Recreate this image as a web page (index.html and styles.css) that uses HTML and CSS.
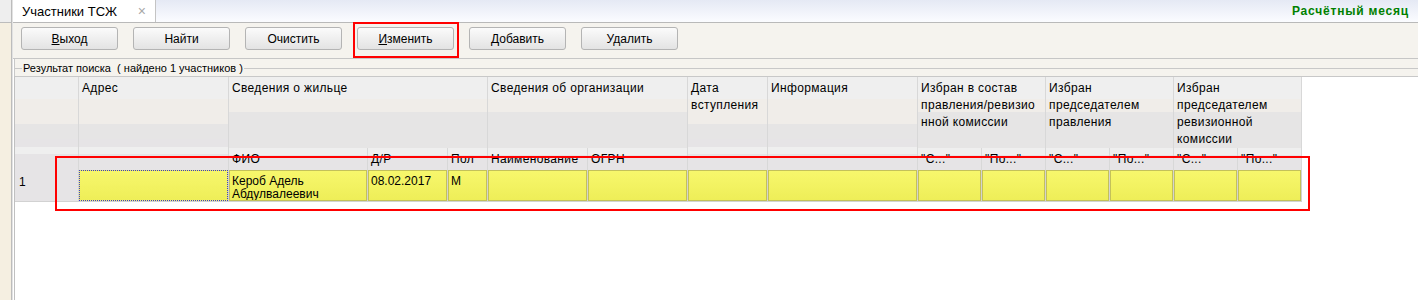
FILE: index.html
```html
<!DOCTYPE html>
<html lang="ru">
<head>
    <meta charset="UTF-8">
    <title>Участники ТСЖ</title>
    <link rel="stylesheet" href="styles.css">
</head>
<body>
    <div class="app">
        <div class="side"><div class="side-top"></div></div>
        <div class="main">
            <div class="tabbar">
                <div class="tab"><span>Участники ТСЖ</span><span class="close">×</span></div>
                <div class="period">Расчётный месяц</div>
            </div>
            <div class="toolbar">
                <button class="btn"><u>В</u>ыход</button>
                <button class="btn">Найти</button>
                <button class="btn">Очистить</button>
                <span class="marked"><button class="btn"><u>И</u>зменить</button></span>
                <button class="btn">Добавить</button>
                <button class="btn">Удалить</button>
            </div>
            <div class="caption"><span>Результат поиска&nbsp; ( найдено 1 участников )</span></div>
            <div class="grid-wrap">
                <table class="grid">
                    <colgroup>
                        <col style="width:64px"><col style="width:150px">
                        <col style="width:139px"><col style="width:80px"><col style="width:40px">
                        <col style="width:100px"><col style="width:100px">
                        <col style="width:80px"><col style="width:150px">
                        <col style="width:64px"><col style="width:64px">
                        <col style="width:64px"><col style="width:64px">
                        <col style="width:64px"><col style="width:64px">
                    </colgroup>
                    <tr class="head">
                        <th rowspan="2"></th>
                        <th rowspan="2">Адрес</th>
                        <th colspan="3" class="group">Сведения о жильце</th>
                        <th colspan="2" class="group">Сведения об организации</th>
                        <th rowspan="2">Дата<br>вступления</th>
                        <th rowspan="2">Информация</th>
                        <th colspan="2" class="group">Избран в состав<br>правления/ревизио<br>нной комиссии</th>
                        <th colspan="2" class="group">Избран<br>председателем<br>правления</th>
                        <th colspan="2" class="group">Избран<br>председателем<br>ревизионной<br>комиссии</th>
                    </tr>
                    <tr class="sub">
                        <th>ФИО</th><th>Д/Р</th><th>Пол</th>
                        <th>Наименование</th><th>ОГРН</th>
                        <th>"С..."</th><th>"По..."</th>
                        <th>"С..."</th><th>"По..."</th>
                        <th>"С..."</th><th>"По..."</th>
                    </tr>
                    <tr class="row">
                        <td class="num">1</td>
                        <td><div class="cell focus"></div></td>
                        <td><div class="cell">Кероб Адель<br>Абдулвалеевич</div></td>
                        <td><div class="cell">08.02.2017</div></td>
                        <td><div class="cell">М</div></td>
                        <td><div class="cell"></div></td>
                        <td><div class="cell"></div></td>
                        <td><div class="cell"></div></td>
                        <td><div class="cell"></div></td>
                        <td><div class="cell"></div></td>
                        <td><div class="cell"></div></td>
                        <td><div class="cell"></div></td>
                        <td><div class="cell"></div></td>
                        <td><div class="cell"></div></td>
                        <td><div class="cell"></div></td>
                    </tr>
                </table>
                <div class="row-mark"></div>
            </div>
        </div>
    </div>
</body>
</html>
```

FILE: styles.css
```css
body {
    margin: 0;
    font-family: "Liberation Sans", Arial, sans-serif;
    font-size: 12px;
    color: #000;
    background: #fff;
}
.app {
    display: flex;
    height: 300px;
    overflow: hidden;
}
.side {
    width: 11px;
    flex: none;
    background: #f5efe1;
    border-right: 1px solid #bcbcbc;
}
.side-top {
    height: 22px;
    background: #eeeeee;
    border-bottom: 1px solid #bcbcbc;
}
.main {
    flex: 1;
    display: flex;
    flex-direction: column;
    border-left: 1px solid #e2e2e2;
}
.tabbar {
    height: 22px;
    display: flex;
    align-items: stretch;
    background: linear-gradient(#e5e9f4, #fbfcff);
    border-bottom: 1px solid #b9b9b9;
}
.tab {
    width: 133px;
    display: flex;
    align-items: center;
    padding-left: 9px;
    background: #fff;
    border-right: 1px solid #c4c4c4;
    font-size: 13px;
}
.tab .close {
    margin-left: auto;
    padding-right: 9px;
    color: #a8a8a8;
    font-size: 14px;
}
.period {
    margin-left: auto;
    padding-right: 9px;
    align-self: center;
    color: #008000;
    font-weight: bold;
    font-size: 12px;
    letter-spacing: 0.8px;
}
.toolbar {
    height: 36px;
    display: flex;
    align-items: flex-start;
    gap: 15px;
    padding: 4px 0 0 8px;
    box-sizing: border-box;
    background: #f5f3ee;
    border-bottom: 1px solid #c6c6c6;
}
.btn {
    width: 97px;
    height: 23px;
    padding: 0;
    font-family: inherit;
    font-size: 12px;
    color: #000;
    background: linear-gradient(#fbfbfb, #e3e3e3);
    border: 1px solid #b4b4b4;
    border-radius: 3px;
}
.marked {
    position: relative;
    display: inline-block;
    height: 23px;
}
.marked::after {
    content: "";
    position: absolute;
    left: -4px;
    top: -5px;
    right: -5px;
    bottom: -8px;
    border: 2px solid #ff0000;
}
.caption {
    height: 17px;
    display: flex;
    align-items: center;
    background: #f5f3ee;
    margin-left: 1px;
    border-left: 1px solid #c8c8c8;
}
.caption::before,
.caption::after {
    content: "";
    height: 1px;
    margin-top: 2px;
    background: #c8c8c8;
}
.caption::before {
    width: 7px;
}
.caption::after {
    flex: 1;
}
.caption span {
    padding: 0 1px;
    font-size: 11px;
    line-height: 14px;
}
.grid-wrap {
    position: relative;
    flex: 1;
    margin-left: 1px;
    background: #fff;
    border-top: 1px solid #c8c8c8;
    border-left: 1px solid #c0c0c0;
}
.grid {
    border-collapse: separate;
    border-spacing: 0;
    table-layout: fixed;
    width: 1287px;
}
.grid th {
    padding: 3px 0 0 3px;
    text-align: left;
    vertical-align: top;
    font-weight: normal;
    letter-spacing: 0.35px;
    line-height: 17px;
    white-space: nowrap;
    overflow: hidden;
    border-right: 1px solid #d8d8d8;
    background: linear-gradient(#efefef 0 22px, #f0ede9 22px 35px, #e6e5e5 35px);
}
.grid .head th {
    height: 67px;
}
.grid .head th[rowspan] {
    background: linear-gradient(#efefef 0 22px, #f0ede9 22px 47px, #e6e5e5 47px 62px, #e6e4e6 62px 70px, #efefef 70px 77px, #e6e4e6 77px);
}
.grid .sub th {
    height: 19px;
    background: linear-gradient(#efefef 0 7px, #e6e4e6 7px);
}
.grid td {
    padding: 0;
    height: 31px;
    vertical-align: top;
    background: #e6e4e6;
    border-right: 1px solid #d2d2d2;
    border-bottom: 1px solid #d2d2d2;
}
.grid td.num {
    padding: 6px 0 0 4px;
    line-height: 13px;
    box-sizing: border-box;
}
.cell {
    height: 31px;
    box-sizing: border-box;
    padding: 4px 2px 0 2px;
    line-height: 13px;
    white-space: nowrap;
    overflow: hidden;
    background: linear-gradient(#f7f76c, #eeee58);
    border: 1px solid #c3c15a;
}
.cell.focus {
    border: 1px dotted #3c3cc8;
}
.row-mark {
    position: absolute;
    left: 40px;
    top: 79px;
    width: 1255px;
    height: 55px;
    box-sizing: border-box;
    border: 2px solid #ff0000;
}
```
